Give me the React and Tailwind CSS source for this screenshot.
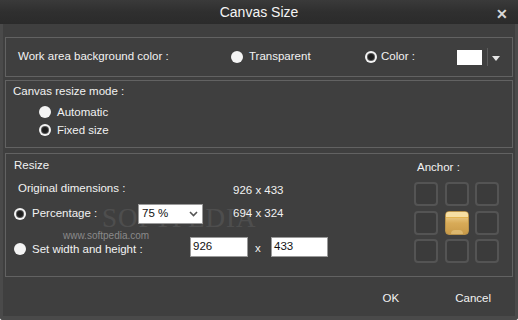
import React from "react";

const font = { fontFamily: '"Liberation Sans", Arial, sans-serif' };

const Radio = ({ checked }) => (
  <span className="flex h-[12px] w-[12px] shrink-0 items-center justify-center rounded-full bg-[#f4f4f4]">
    {checked && <span className="h-[6px] w-[6px] rounded-full bg-[#1e1e1e] ring-1 ring-[#555]" />}
  </span>
);

const AnchorCell = ({ active }) =>
  active ? (
    <div className="relative h-6 w-6 overflow-hidden rounded-[4px] border border-[#b8924a] bg-gradient-to-b from-[#f6dc9c] via-[#d8ab58] to-[#c99a48]">
      <div className="h-[5px] bg-[#f7dfa3]" />
      <div className="h-[1px] bg-[#e4b552]" />
      <div className="absolute bottom-[-4px] left-[5px] h-[8px] w-[12px] rounded-full bg-[#e8c987] opacity-60" />
    </div>
  ) : (
    <div className="h-6 w-6 rounded-[4px] border-2 border-[#545454] bg-[#3b3b3b]" />
  );

const Box = ({ className, children }) => (
  <div className={"border border-[#626262] " + className}>{children}</div>
);

export default function App() {
  return (
    <div className="flex h-[320px] w-[518px] flex-col bg-white text-[11.5px] text-[#f2f2f2]" style={font}>
      <div className="relative flex h-[24px] shrink-0 items-center justify-center bg-gradient-to-b from-[#3a3a3a] via-[#2f2f2f] to-[#2b2b2b]">
        <span className="text-[14px] text-[#f4f4f4]">Canvas Size</span>
        <span className="absolute right-[10px] top-[4px] text-[14px] font-bold text-[#d8d8d8]">✕</span>
      </div>

      <div className="relative flex flex-1 flex-col rounded-b-[3px] border-x-[3px] border-b-[4px] border-[#4a4a4a] bg-[#3f3f3f] px-[2px] pt-[13px]">
        <Box className="flex h-[40px] items-center pl-[12px]">
          <span className="w-[213px]">Work area background color :</span>
          <div className="flex w-[134px] items-center gap-[6px]">
            <Radio />
            <span>Transparent</span>
          </div>
          <div className="flex w-[92px] items-center gap-[4px]">
            <Radio checked />
            <span>Color :</span>
          </div>
          <div className="h-[15px] w-[25px] bg-white" />
          <div className="ml-[5px] h-[18px] w-px bg-[#5c5c5c]" />
          <span className="ml-[4px] mt-[3px] border-x-[4px] border-t-[5px] border-x-transparent border-t-[#e6e6e6]" />
        </Box>

        <Box className="mt-[3px] flex h-[68px] flex-col pl-[7px] pt-[3px]">
          <span className="leading-[14px]">Canvas resize mode :</span>
          <div className="ml-[26px] mt-[7px] flex items-center gap-[6px] leading-[14px]">
            <Radio />
            <span>Automatic</span>
          </div>
          <div className="ml-[26px] mt-[4px] flex items-center gap-[6px] leading-[14px]">
            <Radio checked />
            <span>Fixed size</span>
          </div>
        </Box>

        <Box className="relative mt-[5px] flex h-[124px]">
          <span
            className="pointer-events-none absolute left-[96px] top-[44px] text-[27px] tracking-[1px] text-white opacity-[0.08]"
            style={{ fontFamily: '"Liberation Serif", serif' }}
          >
            SOFTPEDIA
          </span>
          <span className="pointer-events-none absolute left-[57px] top-[74px] text-[10px] text-[#8a8a8a]">www.softpedia.com</span>
          <div className="relative flex w-[402px] flex-col pl-[8px] pt-[4px]">
            <span className="leading-[14px]">Resize</span>
            <div className="ml-[4px] mt-[10px] flex h-[14px] items-center">
              <span className="w-[215px]">Original dimensions :</span>
              <span className="mt-[3px]">926 x 433</span>
            </div>
            <div className="mt-[8px] flex h-[20px] items-center">
              <Radio checked />
              <span className="ml-[6px] w-[106px]">Percentage :</span>
              <div className="flex h-[20px] w-[65px] items-center justify-between border border-[#9a9a9a] bg-white pl-[3px] pr-[4px] text-[#111]">
                <span>75 %</span>
                <svg width="9" height="6" viewBox="0 0 9 6">
                  <path d="M1 1l3.5 3.5L8 1" fill="none" stroke="#555" strokeWidth="1.6" />
                </svg>
              </div>
              <span className="ml-[30px]">694 x 324</span>
            </div>
            <div className="mt-[13px] flex h-[20px] items-center">
              <span className="mt-[4px]">
                <Radio />
              </span>
              <span className="ml-[6px] mt-[6px] w-[158px]">Set width and height :</span>
              <div className="flex h-[20px] w-[58px] items-center border border-[#9a9a9a] bg-white pl-[2px] text-[#111]">926</div>
              <span className="ml-[7px] mt-[3px] w-[16px]">x</span>
              <div className="flex h-[20px] w-[57px] items-center border border-[#9a9a9a] bg-white pl-[2px] text-[#111]">433</div>
            </div>
          </div>
          <div className="flex flex-col pl-[6px] pt-[6px]">
            <span className="ml-[3px] leading-[14px]">Anchor :</span>
            <div className="mt-[8px] grid grid-cols-[24px_24px_24px] gap-x-[6.5px] gap-y-[4.5px]">
              <AnchorCell />
              <AnchorCell />
              <AnchorCell />
              <AnchorCell />
              <AnchorCell active />
              <AnchorCell />
              <AnchorCell />
              <AnchorCell />
              <AnchorCell />
            </div>
          </div>
        </Box>

        <div className="flex h-[38px] items-center justify-end pt-[6px]">
          <span className="mr-[56px]">OK</span>
          <span className="mr-[22px]">Cancel</span>
        </div>
      </div>
    </div>
  );
}
